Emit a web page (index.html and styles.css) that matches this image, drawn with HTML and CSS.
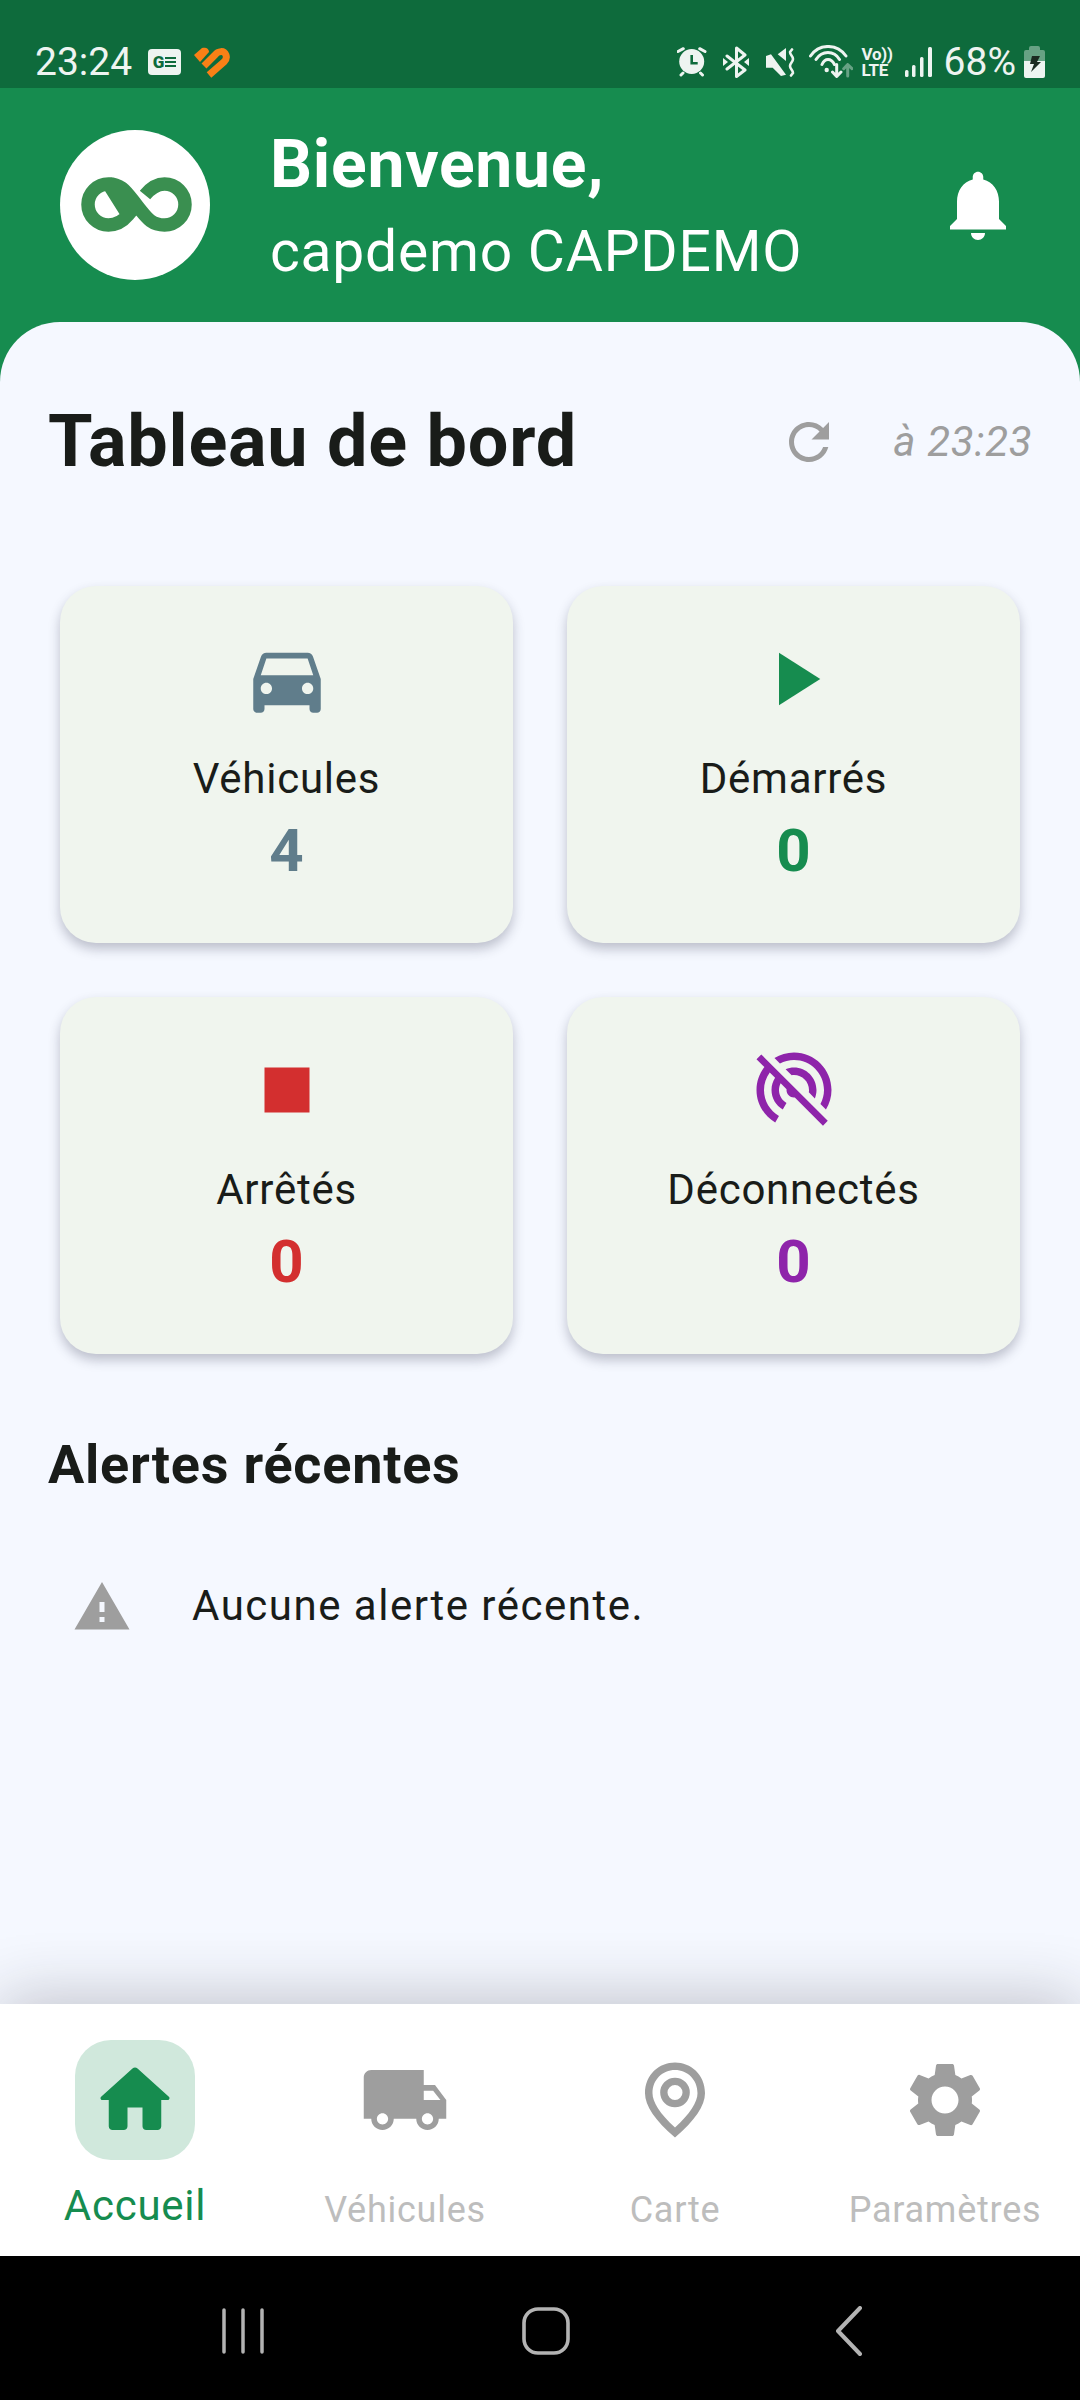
FILE: index.html
```html
<!DOCTYPE html>
<html lang="fr">
<head>
<meta charset="utf-8">
<title>Tableau de bord</title>
<link rel="stylesheet" href="styles.css">
</head>
<body>
<div class="phone">
  <div class="statusbar">
    <span class="clock">23:24</span>
    <span class="gnews"><span class="gnews-g">G</span><span class="gnews-lines"><i></i><i></i><i></i></span></span>
    <svg class="si-heart" width="37" height="31" viewBox="0 0 37 31"><path class="heart-fill" d="M1 8 9 1c3-1 7 0 7 4L7 15z"/><path class="heart-stroke" d="M11 19 22 8c3-4 9-5 11 0 1 3 0 5-2 7L16 28"/></svg>
    <span class="status-spacer"></span>
    <svg class="si-alarm" width="30" height="30" viewBox="0 0 30 30"><circle class="st-fill" cx="14.700" cy="14.500" r="12.500"/><path class="st-line" d="M1 4.500 6.300 1.700M28 4.500 22.700 1.700M6 26 4 28M23.500 26 25.500 28"/><path class="st-hand" d="M14.700 8v8.300h6"/></svg>
    <svg class="si-bt" width="26" height="32" viewBox="0 0 26 32"><path class="st-line" d="M4 10 22 24 13.500 30.500V2l8.500 7L4 23"/><path class="st-fill" d="M0 12l5 4-5 4zM26 12l-5 4 5 4z"/></svg>
    <svg class="si-mute" width="30" height="30" viewBox="0 0 30 30"><path class="st-fill" d="M12.700 6.300 21 0v13zM1 8l5-1.700L21 26.700 16 28l-8.300-8.300H1z"/><path class="st-line st-thin" d="M27 1.500 25 4c0 3 3 4 3 7s-3 4-3 7 3 4 3 7l-2 2.500"/></svg>
    <svg class="si-wifi" width="44" height="33" viewBox="0 0 44 33"><path class="st-line" d="M1.500 11C10-1.700 28-1.700 37 11M7 14.500C13 5.200 25 5.200 30.500 14.500M13 19.500C16 12.800 22 12.800 25.500 19.500"/><circle class="st-fill" cx="17.700" cy="25" r="2.200"/><path class="st-line" d="M27.700 19.500V31M23.500 27 27.700 31.500 32 27"/><path class="st-line st-dim" d="M38.700 31V19.500M34.700 23.700 38.700 19.500 43 23.700"/></svg>
    <span class="volte"><span>Vo))</span><span>LTE</span></span>
    <svg class="si-signal" width="27" height="30" viewBox="0 0 27 30"><rect class="st-fill" x="0" y="23" width="3.500" height="7" rx="1.500"/><rect class="st-fill" x="7" y="18" width="3.500" height="12" rx="1.500"/><rect class="st-fill" x="15" y="10" width="3.500" height="20" rx="1.500"/><rect class="st-fill" x="23" y="0" width="4" height="30" rx="1.500"/></svg>
    <span class="battery-text">68%</span>
    <svg class="si-battery" width="21" height="32" viewBox="0 0 21 32"><path class="st-fill st-half" d="M5 2a2 2 0 0 1 2-2h7a2 2 0 0 1 2 2v2h3a2 2 0 0 1 2 2v10H0V6a2 2 0 0 1 2-2h3z"/><path class="st-fill" d="M0 15h21v15a2 2 0 0 1-2 2H2a2 2 0 0 1-2-2z"/><path class="bolt" d="M8 10h8l-3 6h4L7 26l3-8H6z"/></svg>
  </div>

  <header class="topbar">
    <div class="avatar">
      <svg width="150" height="150" viewBox="0 0 150 150"><path class="logo" d="M48.500 54C62 54 66 62 76.500 75S91 95 104.500 95A20.500 20.500 0 0 0 104.500 54C96 54 90 59 85 65M68 85C63 91 57 95 48.500 95A20.500 20.500 0 0 1 48.500 54z"/></svg>
    </div>
    <div class="welcome">
      <div class="welcome-title">Bienvenue,</div>
      <div class="welcome-name">capdemo CAPDEMO</div>
    </div>
    <svg class="bell" width="84" height="84" viewBox="0 0 24 24"><path d="M12 22c1.100 0 2-.9 2-2h-4c0 1.100.89 2 2 2zm6-6v-5c0-3.070-1.640-5.640-4.500-6.320V4c0-.83-.67-1.500-1.500-1.500s-1.500.67-1.500 1.500v.68C7.630 5.360 6 7.920 6 11v5l-2 2v1h16v-1l-2-2z"/></svg>
  </header>

  <main class="sheet">
    <div class="title-row">
      <h1 class="title">Tableau de bord</h1>
      <div class="title-meta">
        <svg class="refresh" width="60" height="60" viewBox="0 0 24 24"><path d="M17.650 6.350C16.200 4.900 14.210 4 12 4c-4.420 0-7.990 3.580-7.990 8s3.570 8 7.990 8c3.730 0 6.840-2.550 7.730-6h-2.080c-.82 2.330-3.040 4-5.650 4-3.310 0-6-2.690-6-6s2.690-6 6-6c1.660 0 3.140.69 4.220 1.780L13 11h7V4l-2.350 2.350z"/></svg>
        <span class="updated">à 23:23</span>
      </div>
    </div>

    <section class="cards">
      <article class="card card-slate">
        <svg class="card-icon" width="90" height="90" viewBox="0 0 24 24"><path d="M18.920 6.010C18.720 5.420 18.160 5 17.500 5h-11c-.66 0-1.210.42-1.420 1.010L3 12v8c0 .55.45 1 1 1h1c.55 0 1-.45 1-1v-1h12v1c0 .55.45 1 1 1h1c.55 0 1-.45 1-1v-8l-2.080-5.990zM6.500 16c-.83 0-1.500-.67-1.500-1.500S5.670 13 6.500 13s1.500.67 1.500 1.500S7.330 16 6.500 16zm11 0c-.83 0-1.500-.67-1.500-1.500s.67-1.500 1.500-1.500 1.500.67 1.500 1.500-.67 1.500-1.500 1.500zM5 11l1.500-4.500h11L19 11H5z"/></svg>
        <div class="card-label">Véhicules</div>
        <div class="card-value">4</div>
      </article>
      <article class="card card-green">
        <svg class="card-icon" width="90" height="90" viewBox="0 0 24 24"><path d="M8 5v14l11-7z"/></svg>
        <div class="card-label">Démarrés</div>
        <div class="card-value">0</div>
      </article>
      <article class="card card-red">
        <svg class="card-icon" width="90" height="90" viewBox="0 0 24 24"><path d="M6 6h12v12H6z"/></svg>
        <div class="card-label">Arrêtés</div>
        <div class="card-value">0</div>
      </article>
      <article class="card card-purple">
        <svg class="card-icon" width="90" height="90" viewBox="0 0 24 24"><path d="M17.560 14.240c.28-.69.44-1.450.44-2.240 0-3.310-2.690-6-6-6-.79 0-1.550.16-2.240.44l1.620 1.620c.2-.03.41-.06.62-.06 2.210 0 4 1.790 4 4 0 .21-.02.42-.05.63l1.610 1.610zM12 4c4.420 0 8 3.580 8 8 0 1.350-.35 2.620-.95 3.740l1.470 1.470C21.460 15.690 22 13.910 22 12c0-5.520-4.480-10-10-10-1.910 0-3.690.55-5.210 1.470l1.460 1.460C9.370 4.340 10.650 4 12 4zM3.270 2.500 2 3.770l2.100 2.100C2.790 7.570 2 9.690 2 12c0 3.700 2.010 6.920 4.990 8.650l1-1.730C5.610 17.530 4 14.960 4 12c0-1.760.57-3.380 1.530-4.690l1.430 1.440C6.360 9.680 6 10.800 6 12c0 2.220 1.210 4.150 3 5.190l1-1.740c-1.190-.7-2-1.970-2-3.450 0-.65.17-1.250.44-1.790l1.580 1.580L10 12c0 1.100.9 2 2 2l.21-.02.01.01 7.510 7.510L21 20.230 4.270 3.500l-1-1z"/></svg>
        <div class="card-label">Déconnectés</div>
        <div class="card-value">0</div>
      </article>
    </section>

    <h2 class="alerts-title">Alertes récentes</h2>
    <div class="alert-row">
      <svg class="alert-icon" width="60" height="60" viewBox="0 0 24 24"><path d="M1 21h22L12 2 1 21zm12-3h-2v-2h2v2zm0-4h-2v-4h2v4z"/></svg>
      <span class="alert-text">Aucune alerte récente.</span>
    </div>
  </main>

  <nav class="tabbar">
    <div class="tab tab-active">
      <span class="tab-icon"><svg width="90" height="90" viewBox="0 0 24 24"><path d="M10 19v-5h4v5c0 .55.45 1 1 1h3c.55 0 1-.45 1-1v-7h1.700c.46 0 .68-.57.33-.87L12.670 3.600c-.38-.34-.96-.34-1.340 0l-8.360 7.530c-.34.3-.13.87.33.87H5v7c0 .55.45 1 1 1h3c.55 0 1-.45 1-1z"/></svg></span>
      <span class="tab-label">Accueil</span>
    </div>
    <div class="tab">
      <span class="tab-icon"><svg width="90" height="90" viewBox="0 0 24 24"><path d="M20 8h-3V4H3c-1.100 0-2 .9-2 2v11h2c0 1.660 1.340 3 3 3s3-1.340 3-3h6c0 1.660 1.340 3 3 3s3-1.340 3-3h2v-5l-3-4zM6 18.500c-.83 0-1.500-.67-1.500-1.500s.67-1.500 1.500-1.500 1.500.67 1.500 1.500-.67 1.500-1.500 1.500zm13.500-9 1.960 2.500H17V9.500h2.500zm-1.500 9c-.83 0-1.500-.67-1.500-1.500s.67-1.500 1.500-1.500 1.500.67 1.500 1.500-.67 1.500-1.500 1.500z"/></svg></span>
      <span class="tab-label">Véhicules</span>
    </div>
    <div class="tab">
      <span class="tab-icon"><svg width="90" height="90" viewBox="0 0 24 24"><path fill-rule="evenodd" d="M18 10.200C18 6.570 15.350 4 12 4s-6 2.570-6 6.200c0 2.340 1.950 5.440 6 9.140 4.050-3.700 6-6.800 6-9.140zM12 2c4.200 0 8 3.220 8 8.200 0 3.320-2.670 7.250-8 11.800-5.330-4.550-8-8.480-8-11.800C4 5.220 7.800 2 12 2zM12 6.050a3.950 3.950 0 1 0 0 7.900 3.950 3.950 0 0 0 0-7.900zM12 8a2 2 0 1 1 0 4 2 2 0 0 1 0-4z"/></svg></span>
      <span class="tab-label">Carte</span>
    </div>
    <div class="tab">
      <span class="tab-icon"><svg width="90" height="90" viewBox="0 0 24 24"><path d="M19.140 12.940c.04-.3.06-.61.06-.94 0-.32-.02-.64-.07-.94l2.030-1.580c.18-.14.23-.41.12-.61l-1.920-3.320c-.12-.22-.37-.29-.59-.22l-2.390.96c-.5-.38-1.030-.7-1.620-.94l-.36-2.540c-.04-.24-.24-.41-.48-.41h-3.840c-.24 0-.43.17-.47.41l-.36 2.540c-.59.24-1.130.57-1.620.94l-2.390-.96c-.22-.08-.47 0-.59.22L2.740 8.870c-.12.21-.08.47.12.61l2.030 1.580c-.05.3-.09.63-.09.94s.02.64.07.94l-2.030 1.580c-.18.14-.23.41-.12.61l1.920 3.320c.12.22.37.29.59.22l2.390-.96c.5.38 1.030.7 1.620.94l.36 2.540c.05.24.24.41.48.41h3.840c.24 0 .44-.17.47-.41l.36-2.540c.59-.24 1.130-.56 1.620-.94l2.390.96c.22.08.47 0 .59-.22l1.920-3.320c.12-.22.07-.47-.12-.61l-2.010-1.580zM12 15.600c-1.980 0-3.600-1.620-3.600-3.600s1.620-3.600 3.600-3.600 3.600 1.620 3.600 3.600-1.620 3.600-3.600 3.600z"/></svg></span>
      <span class="tab-label">Paramètres</span>
    </div>
  </nav>

  <div class="sysnav">
    <svg class="sys-recents" width="42" height="46" viewBox="0 0 42 46"><path d="M2 2v42M21 2v42M40 2v42"/></svg>
    <svg class="sys-home" width="48" height="48" viewBox="0 0 48 48"><rect x="2" y="2" width="44" height="44" rx="14"/></svg>
    <svg class="sys-back" width="28" height="50" viewBox="0 0 28 50"><path d="M25 2 3 25l22 23"/></svg>
  </div>
</div>
</body>
</html>
```

FILE: styles.css
```css
* { box-sizing: border-box; }
html, body { margin: 0; padding: 0; }
body { font-family: Roboto, "Noto Sans", sans-serif; background: #000; }
svg { display: block; flex: none; }

.phone {
  width: 1080px;
  height: 2400px;
  display: flex;
  flex-direction: column;
  overflow: hidden;
  background: #168c4f;
}

/* status bar */
.statusbar {
  height: 88px;
  flex: none;
  background: #0e6b3c;
  color: #eef4f1;
  display: flex;
  align-items: flex-start;
  padding: 0 35px;
}
.clock { font-size: 39px; line-height: 46px; margin-top: 39px; }
.gnews {
  width: 33px; height: 26px; margin: 49px 0 0 16px;
  background: #eef4f1; border-radius: 4px;
  display: flex; align-items: center; justify-content: center; gap: 1px;
  color: #0e6b3c;
}
.gnews-g { font-size: 17px; line-height: 20px; font-weight: 900; }
.gnews-lines { display: flex; flex-direction: column; gap: 2px; }
.gnews-lines i { display: block; width: 11px; height: 2px; background: #0e6b3c; }
.si-heart { margin: 47px 0 0 12px; }
.heart-fill { fill: #f98016; }
.heart-stroke { fill: none; stroke: #f98016; stroke-width: 7; }
.status-spacer { flex: 1; }
.st-fill { fill: #eef4f1; }
.st-half { opacity: .4; }
.st-line { fill: none; stroke: #eef4f1; stroke-width: 3; stroke-linecap: round; stroke-linejoin: round; }
.st-thin { stroke-width: 2.6; }
.st-dim { opacity: .4; }
.st-hand { fill: none; stroke: #0e6b3c; stroke-width: 2.6; }
.bolt { fill: #1b2a21; }
.si-alarm { margin: 47px 0 0 0; }
.si-bt { margin: 46px 0 0 16px; }
.si-mute { margin: 48px 0 0 16px; }
.si-wifi { margin: 45px 0 0 14px; }
.volte {
  margin: 46px 0 0 9px; width: 30px;
  display: flex; flex-direction: column;
  font-size: 17px; line-height: 16px; font-weight: 700;
  letter-spacing: -.3px;
  white-space: nowrap;
}
.si-signal { margin: 47px 0 0 13px; }
.battery-text { font-size: 39px; line-height: 46px; margin: 39px 0 0 12px; }
.si-battery { margin: 46px 0 0 8px; }

/* header */
.topbar {
  height: 234px;
  flex: none;
  background: #168c4f;
  display: flex;
  align-items: flex-start;
  padding: 42px 60px 0;
  color: #fff;
}
.avatar { width: 150px; height: 150px; background: #fff; border-radius: 50%; flex: none; }
.logo { fill: none; stroke: #3a8f50; stroke-width: 13.5; }
.welcome { flex: 1; margin-left: 60px; }
.welcome-title { font-size: 66px; line-height: 78px; font-weight: 700; margin-top: -4.5px; letter-spacing: .75px; }
.welcome-name { font-size: 57px; line-height: 66px; margin-top: 15px; letter-spacing: .75px; }
.bell { fill: #fff; margin-top: 33px; }

/* sheet */
.sheet {
  flex: 1;
  min-height: 0;
  background: #f5f8ff;
  border-radius: 60px 60px 0 0;
  padding: 77.5px 48px 0;
  color: #191c19;
}
.title-row { display: flex; justify-content: space-between; align-items: flex-start; }
.title { margin: 0; font-size: 72px; line-height: 84px; font-weight: 700; letter-spacing: .75px; }
.title-meta { display: flex; align-items: flex-start; gap: 54.5px; margin: 12.5px -.5px 0 0; }
.refresh { fill: #9e9e9e; }
.updated { font-size: 42px; line-height: 50px; font-style: italic; color: #9e9e9e; margin-top: 5px; letter-spacing: .75px; }

.cards {
  display: grid;
  grid-template-columns: 453px 453px;
  gap: 54px;
  margin-top: 102px;
  padding: 0 12px;
}
.card {
  height: 357px;
  background: #f0f5ee;
  border-radius: 36px;
  padding-top: 48px;
  display: flex;
  flex-direction: column;
  align-items: center;
  box-shadow: 0 6px 12px rgba(40, 44, 70, .28);
}
.card-label { font-size: 42px; line-height: 50px; margin-top: 30.5px; letter-spacing: .75px; }
.card-value { font-size: 60px; line-height: 70px; font-weight: 700; margin-top: 11.5px; }
.card-slate .card-icon { fill: #607d8b; }
.card-slate .card-value { color: #607d8b; }
.card-green .card-icon { fill: #168c4f; }
.card-green .card-value { color: #168c4f; }
.card-red .card-icon { fill: #d32f2f; }
.card-red .card-value { color: #d32f2f; }
.card-purple .card-icon { fill: #8e24aa; }
.card-purple .card-value { color: #8e24aa; }

.alerts-title { margin: 79.5px 0 0; font-size: 54px; line-height: 64px; font-weight: 700; letter-spacing: .75px; }
.alert-row { display: flex; align-items: flex-start; margin-top: 79.5px; padding-left: 24px; gap: 60px; }
.alert-icon { fill: #9e9e9e; }
.alert-text { font-size: 42px; line-height: 50px; margin-top: 4px; letter-spacing: 1.5px; }

/* bottom tabs */
.tabbar {
  height: 252px;
  flex: none;
  background: #fff;
  display: grid;
  grid-template-columns: repeat(4, 270px);
  padding-top: 36px;
  position: relative;
  box-shadow: 0 -6px 60px rgba(30, 30, 40, .24);
}
.tab { display: flex; flex-direction: column; align-items: center; }
.tab-icon {
  width: 120px; height: 120px; border-radius: 36px;
  display: flex; align-items: center; justify-content: center;
  fill: #9e9e9e;
}
.tab-label { font-size: 36px; line-height: 56px; margin-top: 22px; color: #bdbdbd; letter-spacing: .75px; white-space: nowrap; }
.tab-active .tab-icon { background: #d0e8dc; fill: #168c4f; }
.tab-active .tab-label { font-size: 42px; margin-top: 17.5px; color: #168c4f; }

/* system nav */
.sysnav { height: 144px; flex: none; background: #000; position: relative; }
.sysnav svg { position: absolute; fill: none; stroke: #b3b3b3; stroke-linecap: round; stroke-linejoin: round; }
.sys-recents { left: 222px; top: 52px; stroke-width: 3.5; }
.sys-home { left: 522px; top: 51px; stroke-width: 3.6; }
.sys-back { left: 835px; top: 50px; stroke-width: 4; }
```
